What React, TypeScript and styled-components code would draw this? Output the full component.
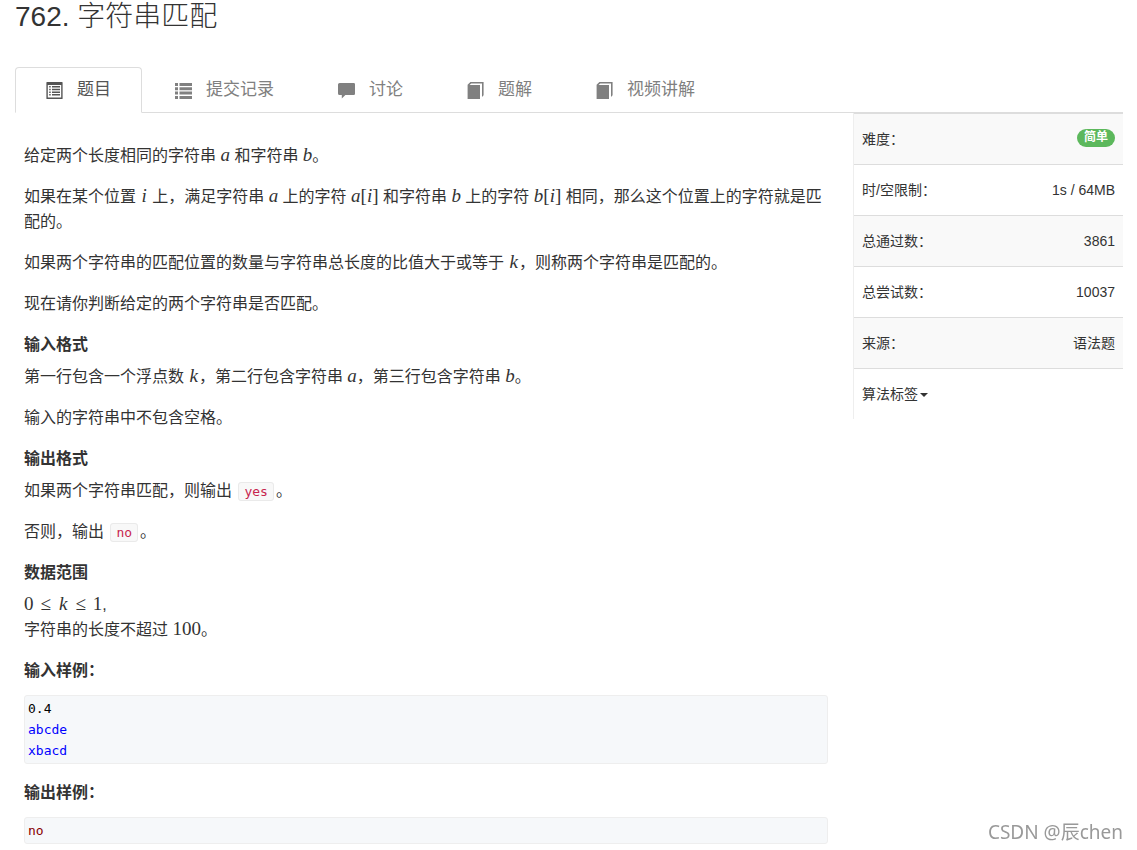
import React from 'react';
import styled, { createGlobalStyle, css } from 'styled-components';

const sans = '"Liberation Sans", "Noto Sans CJK SC", sans-serif';
const mono = '"DejaVu Sans Mono", "Liberation Mono", monospace';

const GlobalStyle = createGlobalStyle`
  *, *::before, *::after { box-sizing: border-box; }
  body {
    margin: 0;
    background: #fff;
    color: #333;
    font: 14px/20px ${sans};
  }
`;

const Page = styled.div`
  padding: 0 14px 5px 15px;
`;

const Title = styled.h1`
  margin: 0 0 33px;
  font-size: 28px;
  line-height: 34px;
  font-weight: 300;
`;

const Tabs = styled.nav`
  display: flex;
  gap: 2px;
  height: 46px;
  border-bottom: 1px solid #ddd;
`;

const Tab = styled.a<{ $active?: boolean }>`
  display: flex;
  align-items: center;
  gap: 14px;
  height: 46px;
  padding: 0 30px;
  border: 1px solid transparent;
  border-radius: 4px 4px 0 0;
  color: #808080;
  font-size: 17px;
  line-height: 24px;
  text-decoration: none;
  ${({ $active }) =>
    $active &&
    css`
      color: #555;
      background: #fff;
      border-color: #ddd #ddd #fff;
    `}
`;

const TabIcon = styled.svg`
  width: 17px;
  height: 17px;
  flex: none;
  fill: currentColor;
`;

const Columns = styled.div`
  display: grid;
  grid-template-columns: minmax(0, 1fr) 270px;
  column-gap: 25px;
  align-items: start;
`;

const Article = styled.article`
  padding: 30px 0 0 9px;
  font-size: 16px;
  line-height: 25px;
`;

const Paragraph = styled.p`
  margin: 0 0 16px;
`;

const Heading = styled.h4`
  margin: 16px 0 7px;
  font-size: 16px;
  line-height: 25px;
  font-weight: 700;
`;

const MathText = styled.span`
  font-family: "Liberation Serif", serif;
  font-size: 19px;
  line-height: 1;
`;

const Letter = styled.i<{ $narrow?: boolean }>`
  padding: 0 ${({ $narrow }) => ($narrow ? 1 : 0)}px;
`;

const Relation = styled.span`
  margin: 0 7px;
`;

const Code = styled.code`
  margin: 0 2px;
  padding: 1px 5px;
  border: 1px solid #eaeaea;
  border-radius: 3px;
  background: #f8f8f8;
  color: #c7254e;
  font: 13px/17px ${mono};
`;

const Sample = styled.pre<{ $color: string }>`
  margin: 12px 0 16px;
  padding: 2px 3px;
  border: 1px solid #eee;
  border-radius: 3px;
  background: #f6f8fa;
  color: ${({ $color }) => $color};
  font: 13px/21px ${mono};
`;

const NumberToken = styled.span`
  color: #000;
`;

const InfoTable = styled.table`
  width: 100%;
  border-collapse: separate;
  border-spacing: 0;
  border-left: 1px solid #eee;
`;

const InfoRow = styled.tr`
  &:nth-child(odd) {
    background: #f9f9f9;
  }
  &:last-child {
    background: #fff;
  }
`;

const Label = styled.th`
  padding: 15px 8px;
  border-top: 1px solid #ddd;
  font-weight: 400;
  text-align: left;
`;

const Value = styled.td`
  padding: 15px 8px;
  border-top: 1px solid #ddd;
  text-align: right;
`;

const Badge = styled.span`
  display: inline-block;
  padding: 2px 7px 4px;
  border-radius: 10px;
  background: #5cb85c;
  color: #fff;
  font-size: 12px;
  line-height: 12px;
  font-weight: 700;
  vertical-align: top;
`;

const TagToggle = styled.button`
  display: flex;
  align-items: center;
  gap: 2px;
  padding: 0;
  border: 0;
  background: none;
  color: inherit;
  font: inherit;
  cursor: pointer;

  &::after {
    content: "";
    margin-top: 2px;
    border-top: 4px solid;
    border-left: 4px solid transparent;
    border-right: 4px solid transparent;
  }
`;

const Watermark = styled.span`
  position: fixed;
  right: 14px;
  bottom: 5px;
  color: #999;
  font: 400 19px/26px "Noto Sans", "Noto Sans CJK SC", sans-serif;
`;

const ListAltIcon = () => (
  <TabIcon viewBox="0 0 17 17" aria-hidden="true">
    <path fillRule="evenodd" d="M1 0h15a.6.6 0 0 1 .6.6v15.8a.6.6 0 0 1-.6.6H1a.6.6 0 0 1-.6-.6V.6A.6.6 0 0 1 1 0zM1.8 3v12.6h13.4V3z" />
    <path d="M3.2 4h1.5v1.5H3.2zM6 4h8v1.5H6zM3.2 6.7h1.5v1.5H3.2zM6 6.7h8v1.5H6zM3.2 9.4h1.5v1.5H3.2zM6 9.4h8v1.5H6zM3.2 12.1h1.5v1.5H3.2zM6 12.1h8v1.5H6z" />
  </TabIcon>
);

const ListIcon = () => (
  <TabIcon viewBox="0 0 17 17" aria-hidden="true">
    <path d="M0 1h3v3H0zM4.5 1H17v3H4.5zM0 5.3h3v3H0zM4.5 5.3H17v3H4.5zM0 9.6h3v3H0zM4.5 9.6H17v3H4.5zM0 13.9h3v3H0zM4.5 13.9H17v3H4.5z" />
  </TabIcon>
);

const CommentIcon = () => (
  <TabIcon viewBox="0 0 17 17" aria-hidden="true">
    <path d="M1.6 1h14.2A1.2 1.2 0 0 1 17 2.2v9.6a1.2 1.2 0 0 1-1.2 1.2H7.4l-3.6 3.6V13H1.6A1.6 1.6 0 0 1 0 11.4V2.6A1.6 1.6 0 0 1 1.6 1z" />
  </TabIcon>
);

const BookIcon = () => (
  <TabIcon viewBox="0 0 17 17" aria-hidden="true">
    <path d="M3.4 0H16.6v13.2L15 15V1.4H4.2L2.6 3H13v14H.6V2.8z" />
  </TabIcon>
);

const tabs = [
  { label: '题目', Icon: ListAltIcon, active: true },
  { label: '提交记录', Icon: ListIcon },
  { label: '讨论', Icon: CommentIcon },
  { label: '题解', Icon: BookIcon },
  { label: '视频讲解', Icon: BookIcon },
];

const info: { label: string; value: React.ReactNode }[] = [
  { label: '难度：', value: <Badge>简单</Badge> },
  { label: '时/空限制：', value: '1s / 64MB' },
  { label: '总通过数：', value: '3861' },
  { label: '总尝试数：', value: '10037' },
  { label: '来源：', value: '语法题' },
];

const Var = ({ name, index }: { name: string; index?: string }) => (
  <MathText>
    <Letter $narrow={name === 'i' || name === 'k'}>{name}</Letter>
    {index && (
      <>
        [<Letter>{index}</Letter>]
      </>
    )}
  </MathText>
);

export default function App() {
  return (
    <Page>
      <GlobalStyle />
      <Title>762. 字符串匹配</Title>
      <Tabs>
        {tabs.map(({ label, Icon, active }) => (
          <Tab key={label} href="#" $active={active}>
            <Icon />
            {label}
          </Tab>
        ))}
      </Tabs>
      <Columns>
        <Article>
          <Paragraph>
            给定两个长度相同的字符串 <Var name="a" /> 和字符串 <Var name="b" />。
          </Paragraph>
          <Paragraph>
            如果在某个位置 <Var name="i" /> 上，满足字符串 <Var name="a" /> 上的字符{' '}
            <Var name="a" index="i" /> 和字符串 <Var name="b" /> 上的字符{' '}
            <Var name="b" index="i" /> 相同，那么这个位置上的字符就是匹配的。
          </Paragraph>
          <Paragraph>
            如果两个字符串的匹配位置的数量与字符串总长度的比值大于或等于 <Var name="k" />
            ，则称两个字符串是匹配的。
          </Paragraph>
          <Paragraph>现在请你判断给定的两个字符串是否匹配。</Paragraph>

          <Heading>输入格式</Heading>
          <Paragraph>
            第一行包含一个浮点数 <Var name="k" />，第二行包含字符串 <Var name="a" />
            ，第三行包含字符串 <Var name="b" />。
          </Paragraph>
          <Paragraph>输入的字符串中不包含空格。</Paragraph>

          <Heading>输出格式</Heading>
          <Paragraph>
            如果两个字符串匹配，则输出 <Code>yes</Code>。
          </Paragraph>
          <Paragraph>
            否则，输出 <Code>no</Code>。
          </Paragraph>

          <Heading>数据范围</Heading>
          <Paragraph>
            <MathText>
              0<Relation>≤</Relation>
              <Letter $narrow>k</Letter>
              <Relation>≤</Relation>1
            </MathText>
            ,
            <br />
            字符串的长度不超过 <MathText>100</MathText>。
          </Paragraph>

          <Heading>输入样例：</Heading>
          <Sample $color="#00f">
            <NumberToken>0.4</NumberToken>
            {'\nabcde\nxbacd'}
          </Sample>

          <Heading>输出样例：</Heading>
          <Sample $color="#880000">no</Sample>
        </Article>
        <aside>
          <InfoTable>
            <tbody>
              {info.map(({ label, value }) => (
                <InfoRow key={label}>
                  <Label scope="row">{label}</Label>
                  <Value>{value}</Value>
                </InfoRow>
              ))}
              <InfoRow>
                <Value colSpan={2}>
                  <TagToggle type="button">算法标签</TagToggle>
                </Value>
              </InfoRow>
            </tbody>
          </InfoTable>
        </aside>
      </Columns>
      <Watermark>CSDN @辰chen</Watermark>
    </Page>
  );
}
